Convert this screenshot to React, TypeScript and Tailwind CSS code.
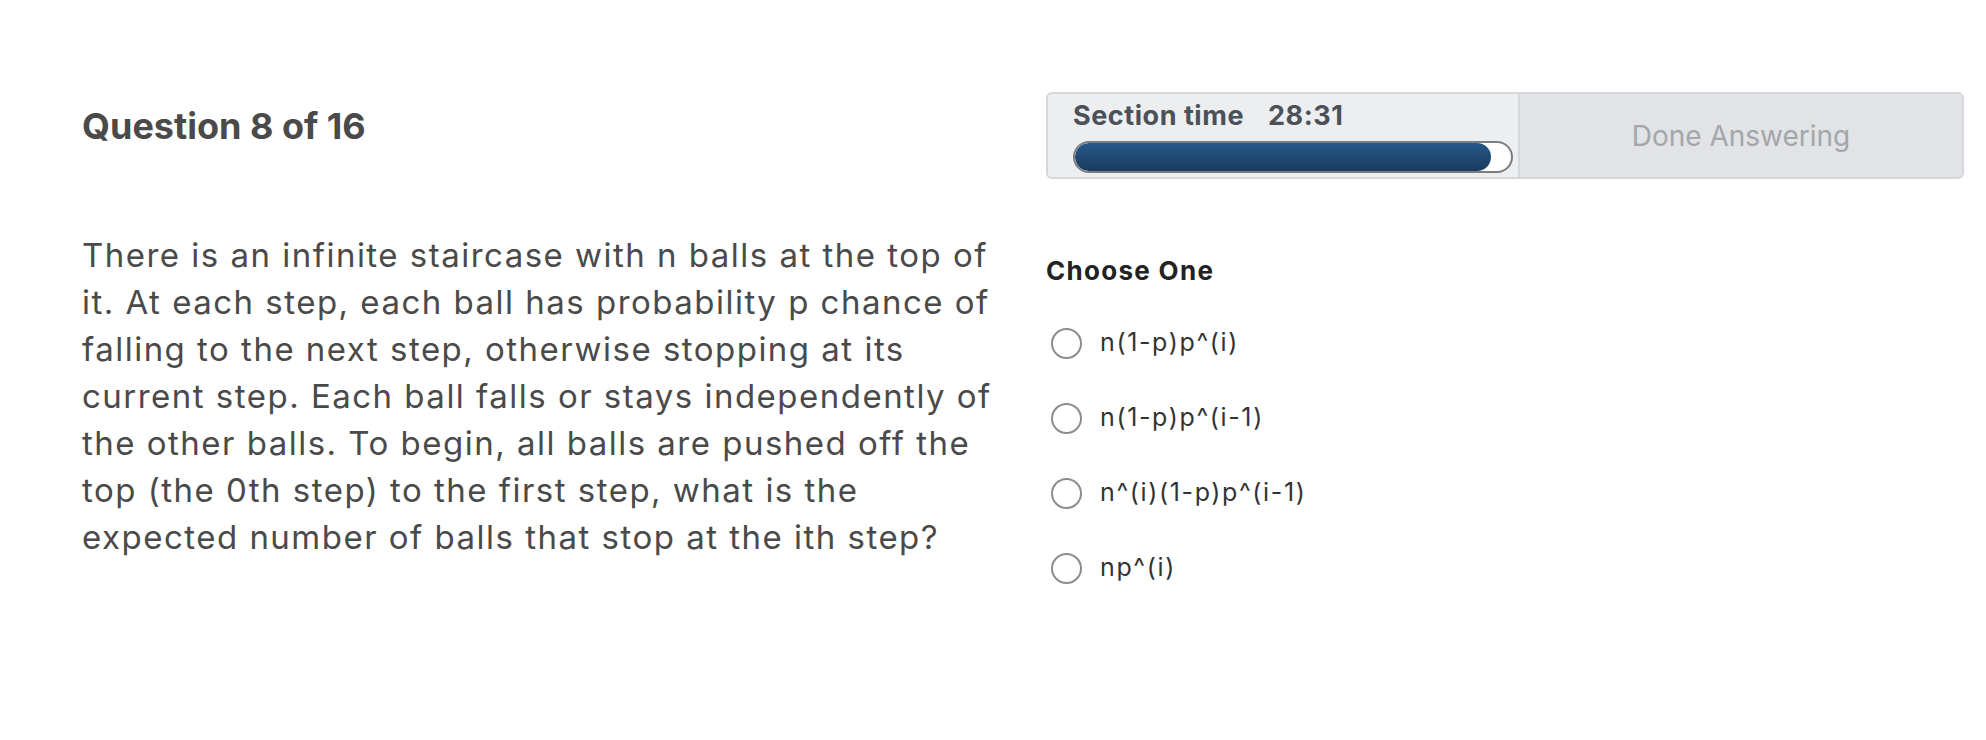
import { useState } from 'react';

const options = ['n(1-p)p^(i)', 'n(1-p)p^(i-1)', 'n^(i)(1-p)p^(i-1)', 'np^(i)'];

export default function App() {
  const [picked, setPicked] = useState<number | null>(null);

  return (
    <div className="w-[1986px] h-[740px] bg-white flex pl-[82px] pt-[92px] font-['Inter',sans-serif]">
      {/* Question */}
      <div className="w-[920px] flex flex-col">
        <h1 className="mt-[14px] text-[36px] leading-[40px] font-bold text-[#4a4a4a]">Question 8 of 16</h1>
        <p className="mt-[86px] w-[915px] text-[33px] leading-[47px] tracking-[0.045em] text-[#4a4a4a]">
          There is an infinite staircase with n balls at the top of it. At each step, each ball has probability p
          chance of falling to the next step, otherwise stopping at its current step. Each ball falls or stays
          independently of the other balls. To begin, all balls are pushed off the top (the 0th step) to the first
          step, what is the expected number of balls that stop at the ith step?
        </p>
      </div>

      {/* Timer + answers */}
      <div className="ml-[44px] w-[918px] flex flex-col">
        <div className="h-[87px] flex rounded-[6px] border-2 border-[#d5d7da] bg-[#eceef0] overflow-hidden">
          <div className="w-[470px] pl-[25px] pt-[4px]">
            <div className="text-[27px] leading-[36px] tracking-[0.02em] font-bold text-[#4b5159] flex gap-[24px]">
              <span>Section time</span>
              <span>28:31</span>
            </div>
            <div className="mt-[7px] w-[440px] h-[32px] rounded-full border-2 border-[#7a7d80] bg-white overflow-hidden">
              <div className="h-full w-[416px] rounded-full bg-gradient-to-b from-[#24598a] to-[#1a3b5e]" />
            </div>
          </div>
          <button className="flex-1 border-l-2 border-[#d5d7da] bg-[#e1e3e6] text-[28px] text-[#a3a7ab] flex items-center justify-center">
            Done Answering
          </button>
        </div>

        <div className="mt-[77px] text-[26px] leading-[30px] tracking-[0.05em] font-bold text-[#222]">Choose One</div>

        <div className="mt-[42px] flex flex-col gap-[45px]">
          {options.map((opt, i) => (
            <label key={opt} className="h-[30px] flex items-center gap-[18px] cursor-pointer" onClick={() => setPicked(i)}>
              <span className="w-[31px] h-[31px] ml-[5px] rounded-full border-2 border-[#8a8d90] bg-white flex items-center justify-center">
                {picked === i && <span className="w-[15px] h-[15px] rounded-full bg-[#1f4f7d]" />}
              </span>
              <span className="text-[25px] tracking-[0.065em] text-[#333]">{opt}</span>
            </label>
          ))}
        </div>
      </div>
    </div>
  );
}
